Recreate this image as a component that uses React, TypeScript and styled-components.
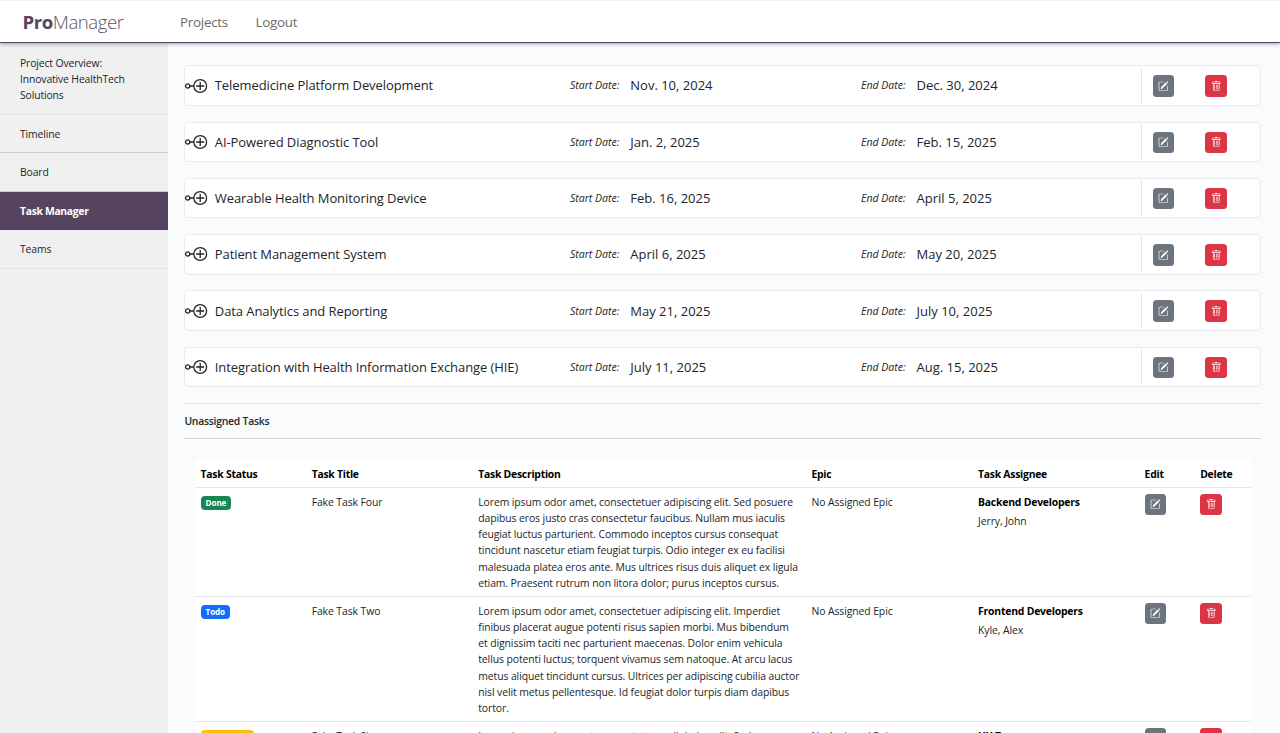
import React from "react";
import styled, { createGlobalStyle } from "styled-components";
import { BsPencilSquare, BsTrash } from "react-icons/bs";

const Global = createGlobalStyle`
  * { box-sizing: border-box; }
  body {
    margin: 0;
    background: #f9fbfd;
    color: #212529;
    font-family: "Open Sans", "Noto Sans", sans-serif;
    font-size: 10.4px;
    line-height: 16.2px;
    letter-spacing: -0.085px;
  }
`;

const Page = styled.div`
  height: 733px;
  overflow: hidden;
  display: flex;
  flex-direction: column;
`;

const Header = styled.header`
  position: relative;
  z-index: 1;
  flex: none;
  height: 43.4px;
  display: flex;
  align-items: center;
  padding: 0 23px 0 22.5px;
  background: #fff;
  border-top: 1px solid #f0f0f0;
  border-bottom: 1px solid #554360;
  box-shadow: 0 1px 4px rgba(0, 0, 0, 0.35);
`;

const Brand = styled.div`
  width: 157.5px;
  font-size: 18.6px;
  line-height: 26px;
  font-weight: 300;
  letter-spacing: -0.45px;
  color: #5c5664;
  b { font-weight: 700; color: #554360; }
`;

const NavLink = styled.a`
  font-size: 13.4px;
  line-height: 20px;
  letter-spacing: -0.27px;
  margin-right: 27.5px;
  color: #6c6c6c;
`;

const Body = styled.div`
  flex: 1;
  min-height: 0;
  display: flex;
`;

const Sidebar = styled.nav`
  flex: none;
  width: 168px;
  background: #f0f0f0;
`;

const SideItem = styled.a<{ $active?: boolean; $height?: number; $line?: string }>`
  display: flex;
  align-items: center;
  height: ${(p) => p.$height ?? 38.6}px;
  padding: 1px 30px 0 20px;
  border-bottom: 1px solid ${(p) => p.$line ?? "#e4e4e4"};
  background: ${(p) => (p.$active ? "#554360" : "transparent")};
  color: ${(p) => (p.$active ? "#fff" : "#212529")};
  font-weight: ${(p) => (p.$active ? 700 : 400)};
  letter-spacing: ${(p) => (p.$active ? -0.33 : -0.14)}px;
`;

const Main = styled.main`
  flex: 1;
  min-width: 0;
  padding: 21.9px 19px 0 16.4px;
`;

const EpicCard = styled.section`
  display: flex;
  align-items: center;
  height: 40.5px;
  margin-bottom: 15.8px;
  background: #fff;
  border: 1px solid #e8eaec;
  border-radius: 4px;
`;

const EpicName = styled.div`
  display: flex;
  align-items: center;
  width: 384.6px;
  font-size: 13px;
  svg { flex: none; margin-right: 6.4px; }
`;

const DateField = styled.div<{ $width: number }>`
  display: flex;
  align-items: center;
  width: ${(p) => p.$width}px;
  font-size: 13px;
  letter-spacing: 0;
  em { font-size: 10.5px; margin-right: 11px; }
`;

const EpicActions = styled.div`
  display: flex;
  align-items: center;
  gap: 31px;
  height: 34px;
  padding: 1px 0 0 10.2px;
  border-left: 1px solid #dee2e6;
`;

const IconButton = styled.button<{ $danger?: boolean }>`
  display: flex;
  align-items: center;
  justify-content: center;
  width: 21.5px;
  height: 21.5px;
  padding: 0;
  border: 0;
  border-radius: 3.5px;
  color: #fff;
  background: ${(p) => (p.$danger ? "#dc3545" : "#6c757d")};
  font-size: 10.5px;
`;

const SectionTitle = styled.h2`
  display: flex;
  align-items: center;
  height: 36px;
  margin: 0 0 21px;
  border-top: 1px solid #e4e7e9;
  border-bottom: 1px solid #cfd2d4;
  font-size: 10.4px;
  font-weight: 600;
  letter-spacing: -0.25px;
`;

const Table = styled.div`
  margin: 0 10.5px 0 11px;
  background: #fff;
`;

const Row = styled.div<{ $height: number; $head?: boolean }>`
  display: grid;
  grid-template-columns: 2fr 3fr 6fr 3fr 3fr 1fr 1fr;
  align-items: start;
  height: ${(p) => p.$height}px;
  border-bottom: 1px solid #e5e7e9;
  font-weight: ${(p) => (p.$head ? 700 : 400)};
  color: ${(p) => (p.$head ? "#000" : "#212529")};
  letter-spacing: ${(p) => (p.$head ? -0.25 : -0.085)}px;
`;

const Cell = styled.div`
  min-width: 0;
  padding: 5.8px 0 0 5.2px;
  white-space: nowrap;
`;

const Team = styled.strong`
  display: block;
  margin-bottom: 2.6px;
  color: #000;
  letter-spacing: -0.2px;
`;

const Badge = styled.span<{ $color: string }>`
  display: block;
  width: fit-content;
  height: 14px;
  margin-top: 2px;
  padding: 0 5px;
  border-radius: 4px;
  background: ${(p) => p.$color};
  color: #fff;
  font-size: 8.1px;
  line-height: 14px;
  font-weight: 700;
  letter-spacing: -0.1px;
`;

const EpicIcon = () => (
  <svg width="23" height="16" viewBox="0 0 23 16" fill="none" stroke="#212529" strokeWidth="1.3">
    <circle cx="2.7" cy="8" r="2.1" />
    <path d="M4.8 8h4M11.2 8h8M15.2 4v8" />
    <circle cx="15.2" cy="8" r="6.4" />
  </svg>
);

const EditButton = () => <IconButton aria-label="Edit"><BsPencilSquare /></IconButton>;
const DeleteButton = () => <IconButton $danger aria-label="Delete"><BsTrash /></IconButton>;

const epics = [
  ["Telemedicine Platform Development", "Nov. 10, 2024", "Dec. 30, 2024"],
  ["AI-Powered Diagnostic Tool", "Jan. 2, 2025", "Feb. 15, 2025"],
  ["Wearable Health Monitoring Device", "Feb. 16, 2025", "April 5, 2025"],
  ["Patient Management System", "April 6, 2025", "May 20, 2025"],
  ["Data Analytics and Reporting", "May 21, 2025", "July 10, 2025"],
  ["Integration with Health Information Exchange (HIE)", "July 11, 2025", "Aug. 15, 2025"],
];

const tasks = [
  {
    status: "Done", color: "#198754", title: "Fake Task Four", height: 109, team: "Backend Developers", people: "Jerry, John",
    lines: [
      "Lorem ipsum odor amet, consectetuer adipiscing elit. Sed posuere",
      "dapibus eros justo cras consectetur faucibus. Nullam mus iaculis",
      "feugiat luctus parturient. Commodo inceptos cursus consequat",
      "tincidunt nascetur etiam feugiat turpis. Odio integer ex eu facilisi",
      "malesuada platea eros ante. Mus ultrices risus duis aliquet ex ligula",
      "etiam. Praesent rutrum non litora dolor; purus inceptos cursus.",
    ],
  },
  {
    status: "Todo", color: "#0d6efd", title: "Fake Task Two", height: 125, team: "Frontend Developers", people: "Kyle, Alex",
    lines: [
      "Lorem ipsum odor amet, consectetuer adipiscing elit. Imperdiet",
      "finibus placerat augue potenti risus sapien morbi. Mus bibendum",
      "et dignissim taciti nec parturient maecenas. Dolor enim vehicula",
      "tellus potenti luctus; torquent vivamus sem natoque. At arcu lacus",
      "metus aliquet tincidunt cursus. Ultrices per adipiscing cubilia auctor",
      "nisl velit metus pellentesque. Id feugiat dolor turpis diam dapibus",
      "tortor.",
    ],
  },
  {
    status: "In Progress", color: "#ffc107", title: "Fake Task Six", height: 109, team: "UX Team", people: "",
    lines: ["Lorem ipsum odor amet, consectetuer adipiscing elit. Sed"],
  },
];

export default function App() {
  return (
    <Page>
      <Global />
      <Header>
        <Brand><b>Pro</b>Manager</Brand>
        <NavLink>Projects</NavLink>
        <NavLink>Logout</NavLink>
      </Header>
      <Body>
        <Sidebar>
          <SideItem $height={71.2}>Project Overview: Innovative HealthTech Solutions</SideItem>
          <SideItem $height={38.4} $line="#cdcdcd">Timeline</SideItem>
          <SideItem $line="#cdcdcd">Board</SideItem>
          <SideItem $active $line="#554360">Task Manager</SideItem>
          <SideItem>Teams</SideItem>
        </Sidebar>
        <Main>
          {epics.map(([name, start, end]) => (
            <EpicCard key={name}>
              <EpicName><EpicIcon />{name}</EpicName>
              <DateField $width={291}><em>Start Date:</em>{start}</DateField>
              <DateField $width={280.4}><em>End Date:</em>{end}</DateField>
              <EpicActions><EditButton /><DeleteButton /></EpicActions>
            </EpicCard>
          ))}
          <SectionTitle>Unassigned Tasks</SectionTitle>
          <Table>
            <Row $head $height={28}>
              {["Task Status", "Task Title", "Task Description", "Epic", "Task Assignee", "Edit", "Delete"].map((h) => (
                <Cell key={h}>{h}</Cell>
              ))}
            </Row>
            {tasks.map((t) => (
              <Row key={t.title} $height={t.height}>
                <Cell><Badge $color={t.color}>{t.status}</Badge></Cell>
                <Cell>{t.title}</Cell>
                <Cell>{t.lines.map((l) => <div key={l}>{l}</div>)}</Cell>
                <Cell>No Assigned Epic</Cell>
                <Cell><Team>{t.team}</Team>{t.people}</Cell>
                <Cell><EditButton /></Cell>
                <Cell><DeleteButton /></Cell>
              </Row>
            ))}
          </Table>
        </Main>
      </Body>
    </Page>
  );
}
